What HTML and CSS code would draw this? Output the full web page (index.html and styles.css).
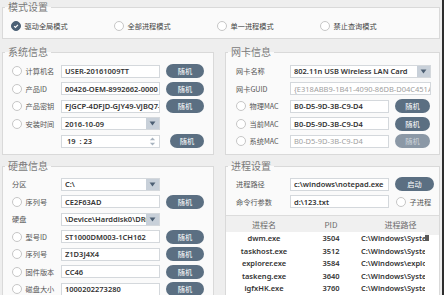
FILE: index.html
```html
<!DOCTYPE html>
<html lang="zh-CN">
<head>
    <meta charset="UTF-8">
    <title>模式设置</title>
    <link rel="stylesheet" href="styles.css">
</head>
<body>
    <div class="app">
        <fieldset class="group mode">
            <legend>模式设置</legend>
            <div class="mode-row">
                <label class="opt"><span class="radio checked"><svg viewBox="0 0 10 10"><path d="M2.7 5.1 L4.3 6.7 L7.4 3.5"/></svg></span>驱动全局模式</label>
                <label class="opt"><span class="radio"></span>全部进程模式</label>
                <label class="opt"><span class="radio"></span>单一进程模式</label>
                <label class="opt"><span class="radio"></span>禁止查询模式</label>
            </div>
        </fieldset>

        <div class="columns">
            <div class="col">
                <fieldset class="group sys">
                    <legend>系统信息</legend>
                    <div class="body">
                        <div class="row">
                            <div class="lead"><span class="radio"></span>计算机名</div>
                            <div class="field"><span class="txt">USER-20161009TT</span></div>
                            <button class="btn">随机</button>
                        </div>
                        <div class="row">
                            <div class="lead"><span class="radio"></span>产品ID</div>
                            <div class="field"><span class="txt">00426-OEM-8992662-0000</span></div>
                            <button class="btn">随机</button>
                        </div>
                        <div class="row">
                            <div class="lead"><span class="radio"></span>产品密钥</div>
                            <div class="field"><span class="txt">FJGCP-4DFJD-GJY49-VJBQ7-HYRR2</span></div>
                            <button class="btn">随机</button>
                        </div>
                        <div class="row">
                            <div class="lead"><span class="radio"></span>安装时间</div>
                            <div class="field combo"><span class="txt">2016-10-09</span><span class="arrow"><svg viewBox="0 0 8 6"><path d="M0.5 0.5 H7.5 L4 5.5 Z"/></svg></span></div>
                        </div>
                        <div class="row time">
                            <div class="lead"></div>
                            <div class="field combo"><span class="txt">&nbsp;19 &nbsp;: 23</span><span class="spin"><svg viewBox="0 0 8 12"><path d="M1 4.5 L4 1.5 L7 4.5 Z M1 7.5 L4 10.5 L7 7.5 Z"/></svg></span></div>
                            <button class="btn">随机</button>
                        </div>
                    </div>
                </fieldset>

                <fieldset class="group disk">
                    <legend>硬盘信息</legend>
                    <div class="body">
                        <div class="row">
                            <div class="lead">分区</div>
                            <div class="field combo"><span class="txt">C:\</span><span class="arrow"><svg viewBox="0 0 8 6"><path d="M0.5 0.5 H7.5 L4 5.5 Z"/></svg></span></div>
                        </div>
                        <div class="row">
                            <div class="lead"><span class="radio"></span>序列号</div>
                            <div class="field"><span class="txt">CE2F63AD</span></div>
                            <button class="btn">随机</button>
                        </div>
                        <div class="row">
                            <div class="lead">硬盘</div>
                            <div class="field combo"><span class="txt">\Device\Harddisk0\DR0</span><span class="arrow"><svg viewBox="0 0 8 6"><path d="M0.5 0.5 H7.5 L4 5.5 Z"/></svg></span></div>
                        </div>
                        <div class="row">
                            <div class="lead"><span class="radio"></span>型号ID</div>
                            <div class="field"><span class="txt">ST1000DM003-1CH162</span></div>
                            <button class="btn">随机</button>
                        </div>
                        <div class="row">
                            <div class="lead"><span class="radio"></span>序列号</div>
                            <div class="field"><span class="txt">Z1D3J4X4</span></div>
                            <button class="btn">随机</button>
                        </div>
                        <div class="row">
                            <div class="lead"><span class="radio"></span>固件版本</div>
                            <div class="field"><span class="txt">CC46</span></div>
                            <button class="btn">随机</button>
                        </div>
                        <div class="row">
                            <div class="lead"><span class="radio"></span>磁盘大小</div>
                            <div class="field"><span class="txt">1000202273280</span></div>
                            <button class="btn">随机</button>
                        </div>
                    </div>
                </fieldset>
            </div>

            <div class="col">
                <fieldset class="group nic">
                    <legend>网卡信息</legend>
                    <div class="body">
                        <div class="row">
                            <div class="lead">网卡名称</div>
                            <div class="field combo wide"><span class="txt">802.11n USB Wireless LAN Card</span><span class="arrow"><svg viewBox="0 0 8 6"><path d="M0.5 0.5 H7.5 L4 5.5 Z"/></svg></span></div>
                        </div>
                        <div class="row">
                            <div class="lead">网卡GUID</div>
                            <div class="field wide dim"><span class="txt">{E318ABB9-1B41-4090-86DB-D04C451A2E7F}</span></div>
                        </div>
                        <div class="row">
                            <div class="lead"><span class="radio"></span>物理MAC</div>
                            <div class="field"><span class="txt">B0-D5-9D-3B-C9-D4</span></div>
                            <button class="btn">随机</button>
                        </div>
                        <div class="row">
                            <div class="lead"><span class="radio"></span>当前MAC</div>
                            <div class="field"><span class="txt">B0-D5-9D-3B-C9-D4</span></div>
                            <button class="btn">随机</button>
                        </div>
                        <div class="row">
                            <div class="lead"><span class="radio"></span>系统MAC</div>
                            <div class="field dim"><span class="txt">B0-D5-9D-3B-C9-D4</span></div>
                            <button class="btn off">随机</button>
                        </div>
                    </div>
                </fieldset>

                <fieldset class="group proc">
                    <legend>进程设置</legend>
                    <div class="body">
                        <div class="row">
                            <div class="lead">进程路径</div>
                            <div class="field"><span class="txt">c:\windows\notepad.exe</span></div>
                            <button class="btn">启动</button>
                        </div>
                        <div class="row">
                            <div class="lead">命令行参数</div>
                            <div class="field"><span class="txt">d:\123.txt</span></div>
                            <label class="sub"><span class="radio"></span>子进程</label>
                        </div>
                    </div>
                    <div class="ptable">
                        <div class="grid">
                            <div class="thead">
                                <span class="c1">进程名</span><span class="c2">PID</span><span class="c3 hd">进程路径</span>
                            </div>
                            <div class="trow"><span class="c1">dwm.exe</span><span class="c2">3504</span><span class="c3">C:\Windows\System32\dwm.exe</span></div>
                            <div class="trow"><span class="c1">taskhost.exe</span><span class="c2">3512</span><span class="c3">C:\Windows\System32\taskhost.exe</span></div>
                            <div class="trow"><span class="c1">explorer.exe</span><span class="c2">3584</span><span class="c3">C:\Windows\explorer.exe</span></div>
                            <div class="trow"><span class="c1">taskeng.exe</span><span class="c2">3640</span><span class="c3">C:\Windows\System32\taskeng.exe</span></div>
                            <div class="trow"><span class="c1">igfxHK.exe</span><span class="c2">3760</span><span class="c3">C:\Windows\System32\igfxHK.exe</span></div>
                            <div class="hbar"><span class="hthumb"></span></div>
                        </div>
                        <div class="vbar"><span class="vtop"></span><span class="vthumb"></span></div>
                    </div>
                </fieldset>
            </div>
        </div>
    </div>
</body>
</html>
```

FILE: styles.css
```css
* {
    box-sizing: border-box;
}
body {
    margin: 0;
    background: #fff;
    font-family: "Noto Sans", "Noto Sans CJK SC", sans-serif;
    color: #333;
}
.app {
    width: 444px;
    height: 295px;
    overflow: hidden;
    padding: 1px 2px 0 2px;
    background: #eeeeee;
    border-right: 2px solid #2e2e2e;
}
.group {
    margin: 0;
    padding: 0;
    min-width: 0;
    border: 1px solid #d9d9d9;
    background: #fafafa;
}
.group legend {
    margin-left: 2px;
    padding: 0 3px;
    font-family: "Noto Sans CJK SC", sans-serif;
    font-size: 10px;
    line-height: 12px;
    color: #7a7a7a;
}
.mode-row {
    display: flex;
    padding: 7px 0 6px 8px;
}
.opt {
    width: 103px;
    height: 12px;
    display: flex;
    align-items: center;
    font-family: "Noto Sans CJK SC", sans-serif;
    font-size: 7.2px;
    color: #444;
}
.radio {
    width: 10px;
    height: 10px;
    flex-shrink: 0;
    margin-right: 3.5px;
    border-radius: 50%;
    border: 1px solid #c6c6c6;
    background: #fff;
}
.radio.checked {
    background: #4c6176;
    border-color: #4c6176;
}
.radio svg {
    display: block;
    width: 8px;
    height: 8px;
}
.radio svg path {
    fill: none;
    stroke: #fff;
    stroke-width: 1.5;
}
.columns {
    display: grid;
    grid-template-columns: 212px 215px;
    column-gap: 11px;
    margin-top: 7px;
}
.col {
    display: flex;
    flex-direction: column;
    gap: 5px;
}
.body {
    display: flex;
    flex-direction: column;
    gap: 3.5px;
    padding: 6px 9px 6px 9px;
}
.nic .body, .proc .body {
    padding-left: 10px;
}
.disk .body, .proc .body {
    padding-top: 5px;
}
.proc .body {
    padding-right: 0;
    padding-bottom: 0;
}
.row {
    display: flex;
    align-items: center;
    height: 14px;
}
.lead {
    width: 49px;
    flex-shrink: 0;
    display: flex;
    align-items: center;
    font-family: "Noto Sans CJK SC", sans-serif;
    font-size: 7.2px;
    color: #555;
    white-space: nowrap;
}
.nic .lead, .proc .lead {
    width: 54px;
}
.field {
    width: 99px;
    height: 13px;
    flex-shrink: 0;
    display: flex;
    align-items: center;
    padding-left: 3px;
    border: 1px solid #d4d8dc;
    background: #fff;
    font-size: 7.5px;
    font-weight: 600;
    color: #333;
    overflow: hidden;
    white-space: nowrap;
}
.field .txt {
    flex: 1;
    overflow: hidden;
}
.field.wide {
    width: 141px;
}
.field.dim {
    color: #a0a0a0;
    font-weight: 400;
}
.combo {
    padding-right: 0;
}
.arrow {
    width: 13px;
    align-self: stretch;
    display: flex;
    align-items: center;
    justify-content: center;
    background: #c8d0d9;
}
.arrow svg {
    width: 7px;
    height: 5px;
}
.arrow svg path {
    fill: #4d5f73;
}
.spin {
    width: 13px;
    align-self: stretch;
    display: flex;
    align-items: center;
    justify-content: center;
}
.spin svg {
    width: 7px;
    height: 11px;
}
.spin svg path {
    fill: #a8b3bf;
}
.btn {
    width: 38px;
    height: 14px;
    margin-left: 6px;
    padding: 0;
    border: none;
    border-radius: 7px;
    background: #5b6f82;
    color: #fff;
    font-family: "Noto Sans CJK SC", sans-serif;
    font-size: 7.2px;
    line-height: 14px;
}
.nic .btn, .proc .btn {
    width: 39px;
}
.btn.off {
    background: #8b98a6;
    color: #cdd4db;
}
.time .btn {
    margin-left: 10px;
}
.sub {
    display: flex;
    align-items: center;
    margin-left: 7px;
    font-family: "Noto Sans CJK SC", sans-serif;
    font-size: 7.2px;
    color: #555;
    white-space: nowrap;
}
.ptable {
    display: flex;
    margin-top: 6.5px;
    border-top: 1px solid #dcdcdc;
    background: #fff;
}
.grid {
    width: 199px;
    overflow: hidden;
}
.thead, .trow {
    display: flex;
    align-items: center;
    white-space: nowrap;
}
.thead {
    width: 214px;
    height: 16px;
    background: #f0f0f0;
    font-family: "Noto Sans CJK SC", sans-serif;
    font-size: 8px;
    color: #6a6a6a;
}
.trow {
    width: 214px;
    height: 12.5px;
    font-size: 7.5px;
    font-weight: 600;
    color: #333;
}
.c1 {
    width: 76px;
    text-align: center;
}
.c2 {
    width: 58px;
    text-align: center;
}
.c3 {
    width: 80px;
    padding-left: 1px;
}
.c3.hd {
    text-align: center;
}
.hbar {
    display: block;
    height: 4px;
    background: #e6e6e6;
}
.hthumb {
    display: block;
    width: 110px;
    height: 4px;
    margin-left: 2px;
    background: #b8b8b8;
}
.vbar {
    width: 14px;
    display: flex;
    flex-direction: column;
}
.vtop {
    height: 19px;
    background: #f0f0f0;
}
.vthumb {
    width: 4px;
    height: 6px;
    background: #5a5a5a;
}
```
